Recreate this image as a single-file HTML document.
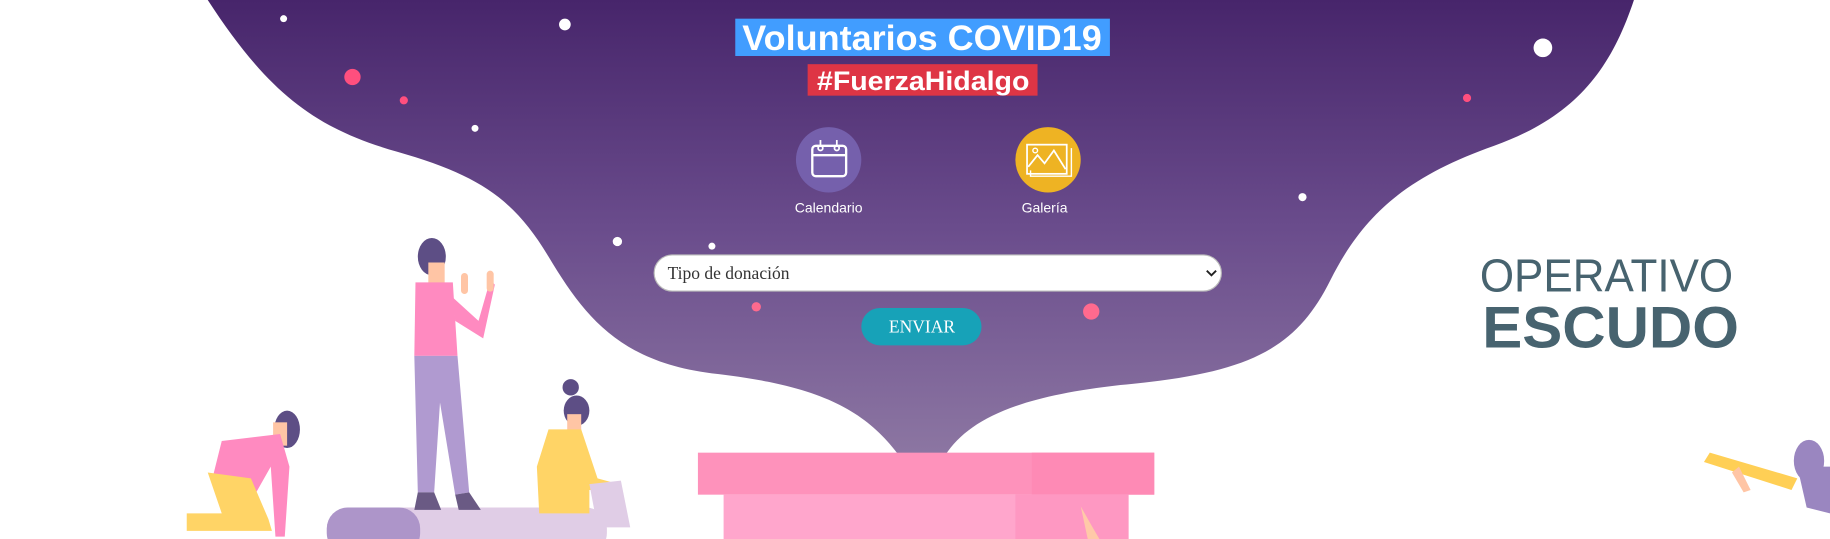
<!DOCTYPE html>
<html><head><meta charset="utf-8"><style>
html,body{margin:0;padding:0;background:#fff;width:1830px;height:539px;overflow:hidden}
svg{display:block}
text{font-family:"Liberation Sans",sans-serif}
</style></head><body>
<svg width="1830" height="539" viewBox="0 0 1568 462" preserveAspectRatio="none">
<defs>
<linearGradient id="g" x1="0" y1="0" x2="0" y2="1">
<stop offset="0" stop-color="#47256b"/>
<stop offset="0.5" stop-color="#6a4c8c"/>
<stop offset="1" stop-color="#8c76a2"/>
</linearGradient>
</defs>
<path d="M178 0 L1400 0 C1380 60 1350 100 1280 125 C1210 150 1170 180 1140 240 C1110 300 1070 320 960 330 C870 340 830 360 810 390 L770 390 C740 350 700 330 610 320 C530 310 500 270 470 220 C440 170 410 150 340 130 C270 110 230 80 178 0 Z" fill="url(#g)"/>
<circle cx="243" cy="16" r="3" fill="#fff"/>
<circle cx="484" cy="21" r="5" fill="#fff"/>
<circle cx="1322" cy="41" r="8" fill="#fff"/>
<circle cx="302" cy="66" r="7" fill="#ff4f7e"/>
<circle cx="346" cy="86" r="3.5" fill="#ff4f7e"/>
<circle cx="1257" cy="84" r="3.5" fill="#ff4f7e"/>
<circle cx="407" cy="110" r="3" fill="#fff"/>
<circle cx="1116" cy="169" r="3.5" fill="#fff"/>
<circle cx="529" cy="207" r="4" fill="#fff"/>
<circle cx="610" cy="211" r="3" fill="#fff"/>
<circle cx="648" cy="263" r="4" fill="#ff6a8e"/>
<circle cx="935" cy="267" r="7" fill="#ff6a8e"/>

<rect x="630" y="16" width="321" height="32" fill="#419dff"/>
<text x="790" y="43" text-anchor="middle" font-size="30" font-weight="bold" fill="#fff" textLength="308" lengthAdjust="spacingAndGlyphs">Voluntarios COVID19</text>
<rect x="692" y="55" width="197" height="27" fill="#de3545"/>
<text x="791" y="77" text-anchor="middle" font-size="23" font-weight="bold" fill="#fff" textLength="182" lengthAdjust="spacingAndGlyphs">#FuerzaHidalgo</text>

<circle cx="710" cy="137" r="28" fill="#7560ac"/>
<rect x="696" y="125" width="29" height="26" rx="3" fill="none" stroke="#fff" stroke-width="2"/>
<line x1="696" y1="133" x2="725" y2="133" stroke="#fff" stroke-width="2"/>
<circle cx="703" cy="127" r="2" fill="none" stroke="#fff" stroke-width="1.5"/>
<circle cx="717" cy="127" r="2" fill="none" stroke="#fff" stroke-width="1.5"/>
<line x1="703" y1="120" x2="703" y2="125" stroke="#fff" stroke-width="1.5"/>
<line x1="717" y1="120" x2="717" y2="125" stroke="#fff" stroke-width="1.5"/>
<text x="710" y="182" text-anchor="middle" font-size="12" fill="#fff">Calendario</text>

<circle cx="898" cy="137" r="28" fill="#eeb323"/>
<rect x="880" y="124" width="34" height="25" fill="none" stroke="#fff" stroke-width="1.5"/>
<polyline points="883,146 883,151 918,151 918,127" fill="none" stroke="#fff" stroke-width="1.2"/>
<polyline points="881,143 889,133 895,140 903,129 913,145" fill="none" stroke="#fff" stroke-width="1.5"/>
<circle cx="887" cy="129" r="2" fill="none" stroke="#fff" stroke-width="1.2"/>
<text x="895" y="182" text-anchor="middle" font-size="12" fill="#fff">Galería</text>

<rect x="560.5" y="218.5" width="486" height="31" rx="15.5" fill="#fff" stroke="#bbb"/>
<text x="572" y="239" font-family="Liberation Serif" font-size="15" fill="#333" style="font-family:'Liberation Serif',serif">Tipo de donación</text>
<polyline points="1034,232 1038,236 1042,232" fill="none" stroke="#222" stroke-width="1.6"/>
<rect x="738" y="264" width="103" height="32" rx="16" fill="#17a2b8"/>
<text x="790" y="285" text-anchor="middle" font-size="15" fill="#fff" style="font-family:'Liberation Serif',serif">ENVIAR</text>

<text x="1268" y="250" font-size="40" fill="#47636f" textLength="217" lengthAdjust="spacingAndGlyphs">OPERATIVO</text>
<text x="1270" y="298" font-size="50" font-weight="bold" fill="#47636f" textLength="220" lengthAdjust="spacingAndGlyphs">ESCUDO</text>

<!-- pink box -->
<rect x="598" y="388" width="391" height="36" fill="#fe92bb"/>
<rect x="884" y="388" width="105" height="36" fill="#fe8ab5"/>
<rect x="620" y="424" width="347" height="38" fill="#ffa6cc"/>
<rect x="870" y="424" width="97" height="38" fill="#fe98c2"/>
<path d="M926 434 L935 450 L942 462 L932 462 Z" fill="#ffc9a8"/>

<!-- bench -->
<rect x="280" y="435" width="240" height="40" rx="18" fill="#e0cde6"/>
<rect x="280" y="435" width="80" height="40" rx="18" fill="#ad95c9"/>

<!-- standing person -->
<ellipse cx="370" cy="220" rx="12" ry="16" fill="#5d4e85"/>
<rect x="367" y="225" width="14" height="22" fill="#ffc5a5"/>
<path d="M356 242 L388 242 L392 305 L355 305 Z" fill="#ff8ac0"/>
<path d="M388 255 L410 275 L420 240 L424 244 L414 290 L390 275 Z" fill="#ff8ac0"/>
<rect x="395" y="234" width="6" height="18" rx="3" fill="#ffc5a5"/>
<rect x="417" y="232" width="6" height="18" rx="3" fill="#ffc5a5"/>
<path d="M355 305 L392 305 L402 422 L390 424 L377 345 L372 422 L358 422 Z" fill="#b09ad0"/>
<path d="M358 422 L372 422 L378 437 L355 437 Z" fill="#6a5a84"/>
<path d="M390 424 L402 422 L412 437 L393 437 Z" fill="#6a5a84"/>

<!-- sitting woman -->
<circle cx="489" cy="332" r="7" fill="#5d4e85"/>
<ellipse cx="494" cy="352" rx="11" ry="13" fill="#5d4e85"/>
<rect x="486" y="355" width="12" height="16" fill="#ffc5a5"/>
<path d="M470 368 L498 368 L512 410 L530 415 L528 420 L505 420 L505 440 L462 440 L460 400 Z" fill="#ffd466"/>
<path d="M505 415 L532 412 L540 452 L512 452 Z" fill="#e0cde6"/>

<!-- kneeling person left -->
<ellipse cx="246" cy="368" rx="11" ry="16" fill="#5d4e85"/>
<rect x="234" y="362" width="12" height="20" fill="#ffc5a5"/>
<path d="M190 378 L240 372 L248 400 L244 460 L236 460 L232 400 L215 430 L205 420 L182 410 Z" fill="#ff8ac0"/>
<path d="M178 405 L215 410 L230 445 L233 455 L160 455 L160 440 L190 440 Z" fill="#ffd466"/>

<!-- right figure -->
<ellipse cx="1550" cy="395" rx="13" ry="18" fill="#9a86c0"/>
<path d="M1540 400 L1568 400 L1568 440 L1548 435 Z" fill="#9a86c0"/>
<path d="M1465 388 L1540 410 L1535 420 L1460 396 Z" fill="#ffcf55"/>
<path d="M1490 400 L1500 420 L1494 422 L1484 405 Z" fill="#ffc5a5"/>
</svg>
</body></html>
